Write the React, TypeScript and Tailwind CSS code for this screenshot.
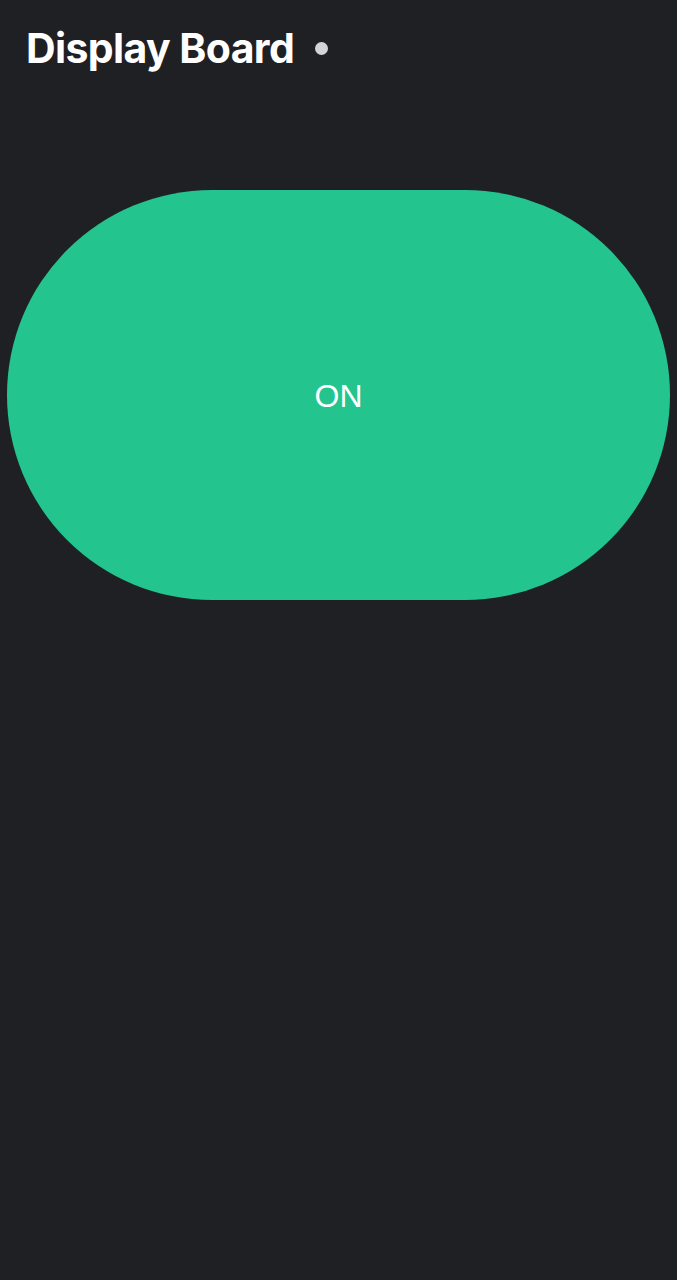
import React from "react";

export default function App() {
  return (
    <div className="min-h-[1280px] w-full bg-[#1f2024] font-['Inter',sans-serif]">
      <header className="flex items-center gap-[21px] px-[26px] pt-[22px]">
        <h1 className="text-[41px] font-bold leading-[52px] tracking-[-0.015em] text-white">
          Display Board
        </h1>
        <span className="h-[13px] w-[13px] rounded-full bg-[#d4d4d8]" />
      </header>
      <div className="px-[7px] pt-[116px]">
        <button className="flex h-[410px] w-full items-center justify-center rounded-full bg-[#23c48e] pt-[2px] font-['Liberation_Sans',Arial,sans-serif] text-[32px] text-white">
          ON
        </button>
      </div>
    </div>
  );
}
